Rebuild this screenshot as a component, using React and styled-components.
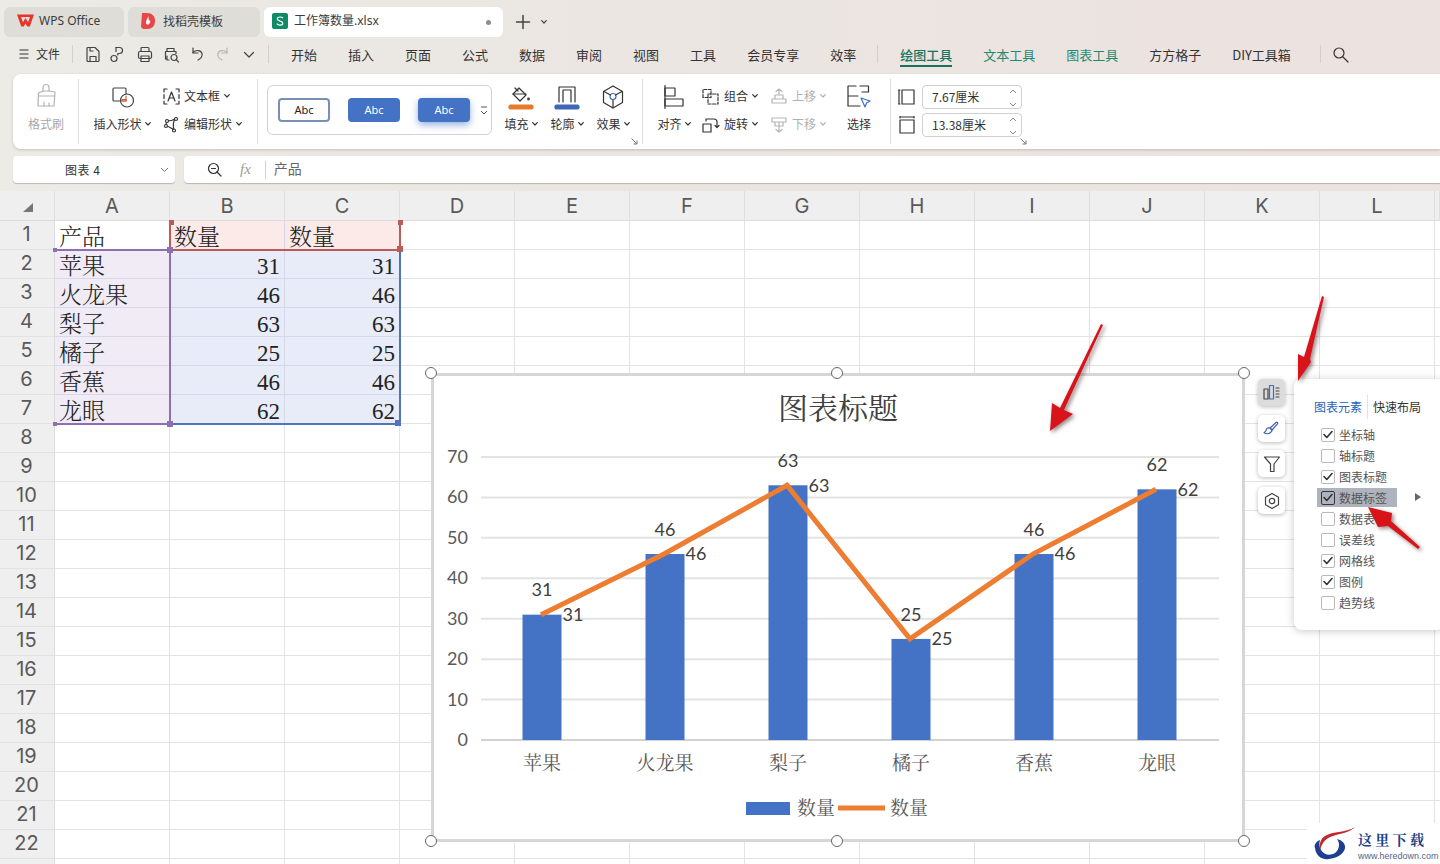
import React from 'react';
import styled, { createGlobalStyle } from 'styled-components';

const UI = '"Noto Sans CJK SC","Noto Sans",sans-serif';
const SERIF = '"Liberation Serif","Noto Serif CJK SC","Noto Sans CJK SC",serif';

const Global = createGlobalStyle`
  html,body{margin:0;padding:0;background:#fff;}
  *{box-sizing:border-box;}
`;
const Page = styled.div`
  position:relative;width:1440px;height:864px;overflow:hidden;display:flex;flex-direction:column;
  background:linear-gradient(90deg,#ecebe6 0%,#ebe6e2 40%,#ece2df 100%);
  font:12px/1 ${UI};color:#333;
`;
/* ---- tab bar ---- */
const TabBar = styled.div`display:flex;align-items:center;height:37px;padding:6px 0 0 4px;gap:4px;`;
const Tab = styled.div`
  display:flex;align-items:center;height:30px;width:${p=>p.$w}px;padding:0 0 2px ${p=>p.$pad||13}px;gap:${p=>p.$gap||5}px;
  border-radius:6px;background:${p=>p.$active?'#fff':'#dfddd8'};font-size:12px;color:#3c3c3c;position:relative;
`;
const TabDot = styled.span`position:absolute;right:12px;top:13px;width:5px;height:5px;border-radius:50%;background:#8d8d8d;`;
const NewTab = styled.div`display:flex;align-items:center;gap:10px;margin-left:8px;color:#444;`;
const Latin = styled.span`font-family:"Noto Sans","Noto Sans CJK SC",sans-serif;font-size:${p=>p.$s||12}px;`;
/* ---- menu ---- */
const MenuBar = styled.div`display:flex;align-items:center;height:37px;padding:0 0 3px 19px;font-size:13px;`;
const FileBtn = styled.div`margin-left:5px;width:36px;font-size:12px;color:#333;`;
const Sep = styled.span`width:1px;height:18px;background:#d3d0cc;margin:0 ${p=>p.$r||0}px 0 ${p=>p.$l||0}px;flex:none;`;
const QuickIcons = styled.div`
  display:flex;align-items:center;gap:10px;margin:0 13px 0 12px;color:#444;
  & > svg:nth-child(2){margin-left:-2px;}
  & > svg:nth-child(3){margin-left:2px;}
  & > svg:nth-child(6){margin-left:2px;}
  & > svg:nth-child(7){margin-left:3px;}
`;
const NavItem = styled.div`
  position:relative;margin-right:${p=>p.$mr??31}px;color:${p=>p.$c||'#333'};font-weight:${p=>p.$on?500:400};white-space:nowrap;
  ${p=>p.$on?`&::after{content:"";position:absolute;left:0;right:0;bottom:-6px;height:2px;background:#16745f;}`:''}
`;
/* ---- ribbon ---- */
const Ribbon = styled.div`
  display:flex;align-items:stretch;height:75px;margin-left:13px;padding:5px 0;background:#fff;
  border-radius:8px 0 0 8px;box-shadow:0 1px 3px rgba(0,0,0,.18);
`;
const Section = styled.div`
  position:relative;display:flex;width:${p=>p.$w}px;padding-left:${p=>p.$pl||0}px;flex:none;gap:${p=>p.$gap||0}px;
  border-right:${p=>p.$noline?'0':'1px solid #dddddd'};
`;
const Tool = styled.div`
  display:flex;flex-direction:column;align-items:center;width:${p=>p.$w}px;flex:none;color:${p=>p.$off?'#a8a8a8':'#333'};
  & > svg{height:30px;margin-top:3px;}
`;
const ToolLabel = styled.div`display:flex;align-items:center;gap:3px;margin-top:4px;white-space:nowrap;height:16px;`;
const Stack = styled.div`display:flex;flex-direction:column;gap:12px;padding-top:9px;margin-left:${p=>p.$ml||0}px;width:${p=>p.$w||'auto'}px;`;
const Row = styled.div`display:flex;align-items:center;height:16px;gap:4px;white-space:nowrap;color:${p=>p.$off?'#b0b0b0':'#333'};`;
const Gallery = styled.div`
  display:flex;align-items:center;gap:18px;width:225px;height:50px;margin:6px 0 0 9px;padding-left:10px;flex:none;position:relative;
  border:1px solid #cfd2d6;border-radius:6px;
`;
const Abc = styled.div`
  width:52px;height:24px;border-radius:4px;display:flex;align-items:center;justify-content:center;padding-bottom:1px;
  font:11px "Noto Sans",sans-serif;
  color:${p=>p.$fill?'#fff':'#222'};background:${p=>p.$fill?'#4472c4':'#fff'};
  border:${p=>p.$fill?'0':'2px solid #7a8fb5'};
  box-shadow:${p=>p.$glow?'0 3px 7px rgba(68,114,196,.55)':'none'};
`;
const GallerySpin = styled.svg`position:absolute;right:3px;top:19px;`;
const Corner = styled.svg`position:absolute;right:4px;bottom:-1px;`;
const SizeRow = styled.div`display:flex;align-items:center;gap:6px;height:24px;color:#333;`;
const SizeInput = styled.div`
  position:relative;display:flex;align-items:center;width:100px;height:24px;padding-left:9px;
  border:1px solid #cfd0d2;border-radius:4px;font-size:12px;
`;
const Spin = styled.svg`position:absolute;right:3px;top:3px;`;
const SizeCol = styled.div`display:flex;flex-direction:column;gap:4px;padding:6px 0 0 7px;`;
/* ---- formula ---- */
const FormulaRow = styled.div`display:flex;gap:9px;height:27px;margin:7px 0 0 13px;`;
const NameBox = styled.div`
  position:relative;display:flex;align-items:center;width:162px;padding-left:52px;background:#fff;border-radius:4px;
  box-shadow:0 1px 1px rgba(0,0,0,.22);font-size:12px;letter-spacing:.5px;
`;
const NameCaret = styled.svg`position:absolute;right:6px;top:11px;`;
const FormulaBox = styled.div`
  flex:1;display:flex;align-items:center;background:#fff;border-radius:4px 0 0 4px;padding-left:23px;
  box-shadow:0 1px 1px rgba(0,0,0,.22);
`;
const Fx = styled.span`font:italic 15px "Liberation Serif",serif;color:#9b9b9b;margin:0 14px 0 18px;`;
const FormulaText = styled.span`font-size:14px;color:#666;margin:0 0 3px 8px;`;
/* ---- sheet ---- */
const Sheet = styled.div`
  position:relative;flex:1;margin-top:8px;display:grid;background:#fff;overflow:hidden;
  grid-template-columns:55px repeat(12,115px) 5px;grid-auto-rows:29px;
  grid-template-rows:30px;
`;
const Corner0 = styled.div`background:#efefef;border-right:1px solid #e0e0e0;border-bottom:1px solid #dcdcdc;position:relative;`;
const CornerTri = styled.span`position:absolute;left:23px;top:12px;width:0;height:0;border-left:10px solid transparent;border-bottom:9px solid #777;`;
const ColHead = styled.div`
  background:#efefef;border-right:1px solid #dfdfdf;border-bottom:1px solid #dcdcdc;padding-top:1px;
  display:flex;align-items:center;justify-content:center;font:20px Inter,"Noto Sans",sans-serif;color:#595959;
`;
const RowHead = styled.div`
  background:#efefef;border-bottom:1px solid #e2e2e2;border-right:1px solid #dcdcdc;
  display:flex;align-items:center;justify-content:center;font:20px Inter,"Noto Sans",sans-serif;color:#595959;padding:0 1px 2px 0;
`;
const Cell = styled.div`
  border-right:1px solid #e3e3e3;border-bottom:1px solid #e3e3e3;background:${p=>p.$bg||'#fff'};
  ${p=>p.$bg?'border-color:#d5d8e6;':''}
  display:flex;align-items:center;justify-content:${p=>p.$num?'flex-end':'flex-start'};
  padding:4px 4px 0 4px;font:23px/1 ${SERIF};font-weight:300;color:#222;white-space:nowrap;overflow:hidden;
`;
const Range = styled.div`
  position:absolute;left:${p=>p.$x}px;top:${p=>p.$y}px;width:${p=>p.$w}px;height:${p=>p.$h}px;pointer-events:none;
  border-style:solid;border-color:${p=>p.$c};border-width:${p=>p.$b};
`;
const Grip = styled.i`
  position:absolute;width:${p=>p.$s||6}px;height:${p=>p.$s||6}px;background:${p=>p.$c};
  left:${p=>p.$x-(p.$s||6)/2}px;top:${p=>p.$y-(p.$s||6)/2}px;
`;
/* ---- chart ---- */
const Chart = styled.div`
  position:absolute;left:431px;top:373px;width:814px;height:469px;background:#fff;
  border:3px solid #d6d6d6;
`;
const ChartSvg = styled.svg`position:absolute;left:-3px;top:-3px;`;
const Handle = styled.i`
  position:absolute;left:${p=>p.$x-6}px;top:${p=>p.$y-6}px;width:12px;height:12px;border-radius:50%;background:#fff;border:1.5px solid #666;
`;
const SideBtn = styled.div`
  position:absolute;left:1258px;top:${p=>p.$y}px;width:27px;height:27px;border-radius:5px;display:flex;align-items:center;justify-content:center;
  background:${p=>p.$on?'#dcdcdc':'#fff'};box-shadow:0 1px 4px rgba(0,0,0,.28);color:#444;
`;
const Panel = styled.div`
  position:absolute;left:1294px;top:379px;width:150px;height:251px;background:#fff;border-radius:8px;
  box-shadow:0 1px 8px rgba(0,0,0,.22);padding:20px 0 0 20px;
`;
const PanelTabs = styled.div`display:flex;align-items:center;height:15px;margin-bottom:10px;font-size:12px;`;
const PanelTab = styled.span`color:${p=>p.$on?'#2a62b8':'#333'};`;
const PanelSep = styled.span`width:1px;height:24px;background:#e2e2e2;margin:0 5px;`;
const Opts = styled.div`display:flex;flex-direction:column;margin-left:3px;`;
const Opt = styled.div`
  display:flex;align-items:center;gap:4px;height:21px;width:80px;padding-left:4px;color:#555;font-size:12px;position:relative;
  ${p=>p.$hi?'background:linear-gradient(#aeb3bd,#aeb3bd) 0 1px/100% 19px no-repeat;':''}
`;
const Box = styled.span`
  width:14px;height:14px;border:1px solid ${p=>p.$hi?'#334':'#b9b9b9'};border-radius:2px;display:flex;align-items:center;justify-content:center;flex:none;
`;
const OptArrow = styled.span`
  position:absolute;left:98px;top:6px;width:0;height:0;border-left:6px solid #666;border-top:4px solid transparent;border-bottom:4px solid transparent;
`;
const Arrows = styled.svg`position:absolute;left:0;top:0;pointer-events:none;filter:drop-shadow(2px 2px 2px rgba(60,30,30,.55));`;
const Mark = styled.div`
  position:absolute;left:1307px;top:823px;width:133px;height:41px;background:#fff;display:flex;
`;
const MarkLogo = styled.svg`flex:none;`;
const MarkText = styled.div`display:flex;flex-direction:column;margin-left:1px;padding-top:9px;`;
const MarkCn = styled.span`font:700 14px/1 "Noto Serif CJK SC","Noto Sans CJK SC",serif;letter-spacing:3.300px;color:#1d3f86;white-space:nowrap;`;
const MarkEn = styled.span`font:9px/1 "Liberation Sans",sans-serif;color:#56657f;margin-top:6px;white-space:nowrap;`;

/* ---- small drawings ---- */
const Ic = ({w=18,h=18,vb,children,sw=1.2,c='currentColor'})=>(
  <svg width={w} height={h} viewBox={vb||`0 0 ${w} ${h}`} fill="none" stroke={c} strokeWidth={sw} strokeLinecap="round" strokeLinejoin="round">{children}</svg>
);
const Caret = ()=>(<Ic w={6} h={4}><path d="M.7.7 3 3l2.3-2.3"/></Ic>);

const WpsLogo = ()=>(<svg width="17" height="13" viewBox="0 0 17 13"><path fillRule="evenodd" d="M0 .5h17L12.800 12.500H10.300L8.500 9.500 6.700 12.500H4.200zM4 3l2 5.300 2.500-4.300L11 8.300 13 3z" fill="#e8352b"/></svg>);
const DocerLogo = ()=>(<svg width="14" height="18" viewBox="0 0 14 18"><path d="M1 1h5c5 0 8 3 8 8s-3 8-8 8H2L0 15z" fill="#e8474a"/><path d="M7 4c.5 2-2.500 4-2 7 .3 1.500 2 2 3 1 1.500-1.500 1.500-3 .8-4.500C8.500 9 8 9 7.800 8.500 7.500 7 8 6 7 4z" fill="#fff"/></svg>);
const SheetLogo = ()=>(<svg width="16" height="16" viewBox="0 0 16 16"><rect width="16" height="16" rx="2" fill="#0f8a64"/><path d="M11 5.200C10.200 4.300 9 4 8 4 6.500 4 5.300 4.700 5.300 6c0 2.800 5.500 1.500 5.500 4.200 0 1.300-1.300 1.900-2.800 1.900-1.200 0-2.500-.5-3.200-1.400" fill="none" stroke="#fff" strokeWidth="1.200"/></svg>);

const Q = {
  save:<Ic w={16} h={17}><path d="M2 2.500a1 1 0 0 1 1-1h7l4 4v9a1 1 0 0 1-1 1H3a1 1 0 0 1-1-1z"/><path d="M5 15v-4.500h6V15M5 2v3h3"/></Ic>,
  key:<Ic w={16} h={17}><path d="M7 1.500h3.500a3 3 0 0 1 0 6H8.800V9"/><path d="M7 1.500v4"/><circle cx="5" cy="12.500" r="3"/></Ic>,
  print:<Ic w={16} h={17}><path d="M4 5.500v-3a1 1 0 0 1 1-1h6a1 1 0 0 1 1 1v3"/><rect x="1.500" y="5.500" width="13" height="7" rx="1.500"/><path d="M4 10h8v5.500H4z"/></Ic>,
  preview:<Ic w={17} h={17}><path d="M4 5V2.500h7V5M4 13H2.500V5.500h10.500v2M4 10v4h2"/><circle cx="11" cy="11.500" r="3"/><path d="m13.200 13.700 2.300 2.300"/></Ic>,
  undo:<Ic w={14} h={17}><path d="M3 2v5h5"/><path d="M3 6.500c3-3 8-2.500 9 1 .6 2.500-1 5-4 6.500"/></Ic>,
  redo:<Ic w={14} h={17} c="#b5b5b5"><path d="M11 2v5H6"/><path d="M11 6.500c-3-3-8-2.500-9 1-.6 2.500 1 5 4 6.500"/></Ic>,
  down:<Ic w={12} h={17}><path d="m1.500 6.500 4.500 4.500 4.500-4.500"/></Ic>,
};
const GoodsIcons = {
  brush:<Ic w={24} h={30} c="#b3b3b3" vb="0 0 24 30"><path d="M9 9V5.500a3 3 0 0 1 6 0V9"/><path d="M4.500 11 9 9h6l6 1-1 14H4z"/><path d="M4.500 14h16M10 24v-4M15 24v-3"/></Ic>,
  shape:<Ic w={26} h={30} c="#444" vb="0 0 26 30"><rect x="4" y="6" width="13" height="13" rx="1"/><circle cx="18" cy="18.500" r="6.500" fill="#fff"/><path d="M13 17.500h4V19h-4z" stroke="#c8643a"/><path d="M17 14v5h-5" stroke="#c8643a"/></Ic>,
  fill:<Ic w={28} h={30} vb="0 0 28 30"><path d="m6 12 6-6 7 7-6 6z"/><path d="M8 6l3 3M6 12h13"/><circle cx="21.500" cy="17" r=".8"/><rect x="2" y="23" width="24" height="4" rx="1.500" fill="#e57a2a" stroke="#e57a2a"/></Ic>,
  line:<Ic w={28} h={30} vb="0 0 28 30"><path d="M6 20V5h16v15M10 20V8h8v12"/><rect x="2" y="23" width="24" height="4" rx="1.500" fill="#4067b8" stroke="#4067b8"/></Ic>,
  effect:<Ic w={24} h={30} vb="0 0 24 30"><path d="m12 4 9.500 5.500v11L12 26l-9.500-5.500v-11z"/><circle cx="12" cy="14.500" r="3" stroke="#3c6fc4"/><path d="m3 9.500 6.500 3.500M21 9.500l-6.500 3.500M12 18v8"/></Ic>,
  align:<Ic w={24} h={30} vb="0 0 24 30"><path d="M3 3.500v23"/><rect x="3" y="6" width="10" height="8"/><rect x="3" y="17" width="18" height="7"/></Ic>,
  select:<Ic w={26} h={30} vb="0 0 26 30"><path d="M10 4H2v10h10M14 4h8.500v6H16M2 14v10h12"/><path d="m15 16 9 3-3.500 2-1.500 4z" stroke="#3c6fc4"/></Ic>,
};
const Corners = ()=>(<Corner width="7" height="7" viewBox="0 0 7 7" fill="none" stroke="#777"><path d="M.5.500l5.500 5.500M6 2.500V6H2.500"/></Corner>);

const FRUIT=['苹果','火龙果','梨子','橘子','香蕉','龙眼'];
const VALS=[31,46,63,25,46,62];
const COLS=['A','B','C','D','E','F','G','H','I','J','K','L',''];
const yOf=v=>740-v*4.043;
const CX=[542,665,788,911,1034,1157];
const TOPL=[590,530,461,615,530,465];
const SIDEL=[615,554,486,639,554,490];
const OPTS=[['坐标轴',1],['轴标题',0],['图表标题',1],['数据标签',1,1],['数据表',0],['误差线',0],['网格线',1],['图例',1],['趋势线',0]];

function ChartDrawing(){
  const axisFont='"Lato","Noto Sans",sans-serif';
  return (
  <ChartSvg width="814" height="469" viewBox="431 373 814 469">
    <text x="838" y="419" textAnchor="middle" fontFamily={SERIF} fontSize="30" fill="#404040">图表标题</text>
    {[0,10,20,30,40,50,60,70].map(v=>(
      <g key={v}>
        <line x1="481" x2="1219" y1={yOf(v)} y2={yOf(v)} stroke={v?'#e3e3e3':'#d2d2d2'} strokeWidth="2"/>
        <text x="468" y={yOf(v)+6} textAnchor="end" fontFamily={axisFont} fontSize="18" fill="#595959">{v}</text>
      </g>
    ))}
    {VALS.map((v,i)=>(<rect key={i} x={CX[i]-19.500} y={yOf(v)} width="39" height={740-yOf(v)} fill="#4472c4"/>))}
    <polyline points={VALS.map((v,i)=>`${CX[i]-1},${yOf(v)}`).join(' ')} fill="none" stroke="#ed7d31" strokeWidth="5" strokeLinejoin="miter"/>
    {VALS.map((v,i)=>(
      <g key={i} fontFamily={axisFont} fontSize="18" fill="#404040">
        <text x={CX[i]} y={TOPL[i]+6} textAnchor="middle">{v}</text>
        <text x={CX[i]+31} y={SIDEL[i]+6} textAnchor="middle">{v}</text>
      </g>
    ))}
    {FRUIT.map((f,i)=>(<text key={f} x={CX[i]} y="770" textAnchor="middle" fontFamily={SERIF} fontSize="19" fill="#595959">{f}</text>))}
    <rect x="746" y="802" width="44" height="13" fill="#4472c4"/>
    <text x="797" y="815" fontFamily={SERIF} fontSize="19" fill="#595959">数量</text>
    <line x1="838" x2="885" y1="808" y2="808" stroke="#ed7d31" strokeWidth="5"/>
    <text x="890" y="815" fontFamily={SERIF} fontSize="19" fill="#595959">数量</text>
  </ChartSvg>);
}

export default function App(){
  return (
  <Page>
    <Global/>
    <TabBar>
      <Tab $w={120} $gap={5}><WpsLogo/><Latin>WPS Office</Latin></Tab>
      <Tab $w={132} $gap={8}><DocerLogo/><span>找稻壳模板</span></Tab>
      <Tab $w={239} $pad={8} $gap={6} $active><SheetLogo/><span>工作簿数量<Latin>.xlsx</Latin></span><TabDot/></Tab>
      <NewTab>
        <Ic w={16} h={16} sw={1.500}><path d="M8 1.500v13M1.500 8h13"/></Ic>
        <Caret/>
      </NewTab>
    </TabBar>
    <MenuBar>
      <Ic w={12} h={12}><path d="M1 2h8M1 6h8M1 10h8"/></Ic>
      <FileBtn>文件</FileBtn>
      <Sep/>
      <QuickIcons>{Q.save}{Q.key}{Q.print}{Q.preview}{Q.undo}{Q.redo}{Q.down}</QuickIcons>
      <Sep $r={22}/>
      {['开始','插入','页面','公式','数据','审阅','视图','工具','会员专享'].map(t=><NavItem key={t}>{t}</NavItem>)}
      <NavItem $mr={21}>效率</NavItem>
      <Sep $r={22}/>
      <NavItem $on $c="#16745f">绘图工具</NavItem>
      <NavItem $c="#1f8a70">文本工具</NavItem>
      <NavItem $c="#1f8a70">图表工具</NavItem>
      <NavItem>方方格子</NavItem>
      <NavItem $mr={29}>DIY工具箱</NavItem>
      <Sep $r={11}/>
      <Ic w={17} h={17}><circle cx="7" cy="7" r="5"/><path d="m11 11 5 5"/></Ic>
    </MenuBar>
    <Ribbon>
      <Section $w={66}>
        <Tool $w={66} $off>{GoodsIcons.brush}<ToolLabel>格式刷</ToolLabel></Tool>
      </Section>
      <Section $w={179} $pl={13}>
        <Tool $w={60}>{GoodsIcons.shape}<ToolLabel>插入形状<Caret/></ToolLabel></Tool>
        <Stack $ml={11}>
          <Row><Ic w={17} h={17}><path d="M1 4V1h3M13 1h3v3M1 13v3h3M13 16h3v-3M1 6.500v4M16 6.500v4"/><path d="m5 13 3.500-9 3.500 9M6.200 10h4.600"/></Ic>文本框<Caret/></Row>
          <Row><Ic w={17} h={17}><path d="M4 5c3 0 5 0 8-2M4 5c-1 2-1 4-1 5M3 10c3 0 5 2 8 4M12 3c-2 3-2 7-1 11"/><circle cx="4" cy="5" r="1.500" fill="#fff"/><circle cx="13" cy="3" r="1.500" fill="#fff"/><circle cx="3" cy="10" r="1.500" fill="#fff"/><circle cx="11" cy="14.500" r="1.500" fill="#fff"/></Ic>编辑形状<Caret/></Row>
        </Stack>
      </Section>
      <Gallery>
        <Abc>Abc</Abc><Abc $fill>Abc</Abc><Abc $fill $glow>Abc</Abc>
        <GallerySpin width="8" height="12" viewBox="0 0 8 12" fill="none" stroke="#555"><path d="M1 2h6M1 6l3 3 3-3"/></GallerySpin>
      </Gallery>
      <Section $w={151} $pl={6}>
        <Tool $w={46}>{GoodsIcons.fill}<ToolLabel>填充<Caret/></ToolLabel></Tool>
        <Tool $w={46}>{GoodsIcons.line}<ToolLabel>轮廓<Caret/></ToolLabel></Tool>
        <Tool $w={46}>{GoodsIcons.effect}<ToolLabel>效果<Caret/></ToolLabel></Tool>
        <Corners/>
      </Section>
      <Section $w={248} $pl={13}>
        <Tool $w={36}>{GoodsIcons.align}<ToolLabel>对齐<Caret/></ToolLabel></Tool>
        <Stack $ml={10} $w={68}>
          <Row><Ic w={18} h={17}><path d="M1 9.500v-8h8v8zM6 6h10v10H6z" strokeDasharray="3 1.500"/></Ic>组合<Caret/></Row>
          <Row><Ic w={18} h={17}><rect x="1" y="8" width="8" height="8"/><path d="M4 5V3h8a3 3 0 0 1 3 3v5M13 9.500l2 2 2-2"/></Ic>旋转<Caret/></Row>
        </Stack>
        <Stack $w={71}>
          <Row $off><Ic w={18} h={17} c="#b5b5b5"><path d="M2 11h14v4H2zM5 11V7h8v4M9 7V1M6 3.500 9 1l3 2.500"/></Ic>上移<Caret/></Row>
          <Row $off><Ic w={18} h={17} c="#b5b5b5"><path d="M2 2h14v4H2zM5 6v4h8V6M9 6v10M6 13.500 9 16l3-2.500"/></Ic>下移<Caret/></Row>
        </Stack>
        <Tool $w={36}>{GoodsIcons.select}<ToolLabel>选择</ToolLabel></Tool>
      </Section>
      <Section $w={140} $noline>
        <SizeCol>
          <SizeRow><Ic w={18} h={18}><path d="M1 2v14M0 2h2M0 16h2M4 2h12v14H4z"/></Ic><SizeInput>7.67厘米<Spin width="10" height="18" viewBox="0 0 10 18" fill="none" stroke="#888"><path d="m2 4 3-3 3 3M2 14l3 3 3-3"/></Spin></SizeInput></SizeRow>
          <SizeRow><Ic w={18} h={18}><path d="M2 1h14M2 0v2M16 0v2M2 4h14v13H2z"/></Ic><SizeInput>13.38厘米<Spin width="10" height="18" viewBox="0 0 10 18" fill="none" stroke="#888"><path d="m2 4 3-3 3 3M2 14l3 3 3-3"/></Spin></SizeInput></SizeRow>
        </SizeCol>
        <Corners/>
      </Section>
    </Ribbon>
    <FormulaRow>
      <NameBox>图表 4<NameCaret width="9" height="6" viewBox="0 0 9 6" fill="none" stroke="#777"><path d="m1 1 3.500 3.500L8 1"/></NameCaret></NameBox>
      <FormulaBox>
        <Ic w={15} h={15}><circle cx="6.500" cy="6.500" r="5"/><path d="M4.500 6.500h4M10 10l4 4"/></Ic>
        <Fx>fx</Fx><Sep/>
        <FormulaText>产品</FormulaText>
      </FormulaBox>
    </FormulaRow>
    <Sheet>
      <Corner0><CornerTri/></Corner0>
      {COLS.map((c,i)=><ColHead key={i}>{c}</ColHead>)}
      {Array.from({length:23}).map((_,r)=>(
        <React.Fragment key={r}>
          <RowHead>{r<22?r+1:''}</RowHead>
          {COLS.map((_c,c)=>{
            let txt='',num=false,bg;
            if(r===0&&c===0)txt='产品';
            if(r===0&&(c===1||c===2)){txt='数量';bg='#fbeae8';}
            if(r>=1&&r<=6&&c===0){txt=FRUIT[r-1];bg='#f1ebf6';}
            if(r>=1&&r<=6&&(c===1||c===2)){txt=VALS[r-1];num=true;bg='#e8ecf8';}
            return <Cell key={c} $num={num} $bg={bg}>{txt}</Cell>;
          })}
        </React.Fragment>
      ))}
      <Range $x={55} $y={58} $w={116} $h={176} $c="#8f6fb3" $b="2px 2px 2px 0">
        <Grip $x={0} $y={-1} $s={4} $c="#8f6fb3"/><Grip $x={0} $y={173} $s={4} $c="#8f6fb3"/>
      </Range>
      <Range $x={169} $y={30} $w={232} $h={30} $c="#c05a58" $b="0 2px 2px 2px">
        <Grip $x={0} $y={1} $s={5} $c="#c05a58"/><Grip $x={229} $y={1} $s={5} $c="#c05a58"/><Grip $x={229} $y={28} $c="#c05a58"/>
      </Range>
      <Range $x={172} $y={60} $w={229} $h={174} $c="#4f74bb" $b="0 2px 2px 0"><Grip $x={226} $y={172} $c="#4f74bb"/></Range>
      <Grip $x={170} $y={59} $c="#8f6fb3"/>
      <Grip $x={170} $y={233} $c="#8f6fb3"/>
    </Sheet>

    <Chart><ChartDrawing/></Chart>
    {[[431,373],[837,373],[1244,373],[431,841],[837,841],[1244,841]].map(([x,y],i)=><Handle key={i} $x={x} $y={y}/>)}

    <SideBtn $y={379} $on><Ic w={17} h={17}><rect x="1" y="5" width="4" height="10"/><rect x="6.500" y="1.500" width="4" height="13.500" stroke="#3c6fc4"/><path d="M13 4h3M13 7h3M13 10h3M13 13h3"/></Ic></SideBtn>
    <SideBtn $y={415}><Ic w={17} h={17} c="#3c62b0"><path d="M7 8 13 2.500c1-.8 2.200.4 1.500 1.400L9 10z"/><path d="M7 8c-2-.5-4 .5-4 2.500 0 1-1 1.500-2 2 2 1.500 5 1.500 6.500 0C9 11.500 9 10 9 10z"/></Ic></SideBtn>
    <SideBtn $y={450}><Ic w={18} h={18}><path d="M1.500 2h15l-5.500 7v7.500H7.500V9z"/></Ic></SideBtn>
    <SideBtn $y={487}><Ic w={18} h={18}><path d="m9 1.500 6.500 3.750v7.500L9 16.500l-6.500-3.750v-7.500z"/><circle cx="9" cy="9" r="2.700"/></Ic></SideBtn>

    <Panel>
      <PanelTabs>
        <PanelTab $on>图表元素</PanelTab><PanelSep/><PanelTab>快速布局</PanelTab>
      </PanelTabs>
      <Opts>
        {OPTS.map(([t,c,h])=>(
          <Opt key={t} $hi={h}>
            <Box $hi={h}>{c?<Ic w={10} h={9} c="#333" sw={1.600}><path d="m1 4.500 2.800 3L9 1.500"/></Ic>:null}</Box>{t}
            {h?<OptArrow/>:null}
          </Opt>
        ))}
      </Opts>
    </Panel>

    <Mark>
      <MarkLogo width="50" height="41" viewBox="2 -2 50 41">
        <path d="M15 15C10 17 9 21 10 23c1 9 8 12 14 11 11-1 17-8 16-13-1-4-4-6-8-7 3 4 3 10-2 14-5 3-11 2-14-3-2-3-2-7-1-10z" fill="#1c3f8f"/>
        <path d="M50 2c-6 6-14 6-22 9-6 2-11 5-13 15-1-6 0-12 5-15C28 6 40 8 50 2z" fill="#c4262e"/>
      </MarkLogo>
      <MarkText>
        <MarkCn>这里下载</MarkCn>
        <MarkEn>www.heredown.com</MarkEn>
      </MarkText>
    </Mark>

    <Arrows width="1440" height="864" viewBox="0 0 1440 864">
      <polygon fill="#d8141a" points="1101,324 1103,325 1064,410 1073,414 1050,431 1052,403 1060,408"/>
      <polygon fill="#d8141a" points="1322,296 1324,297 1310,359 1311,362 1298,381 1298,354 1304,357"/>
      <polygon fill="#d8141a" points="1420,547 1418,549 1388,526 1378,527 1368,507 1392,513 1391,521"/>
    </Arrows>
  </Page>);
}
